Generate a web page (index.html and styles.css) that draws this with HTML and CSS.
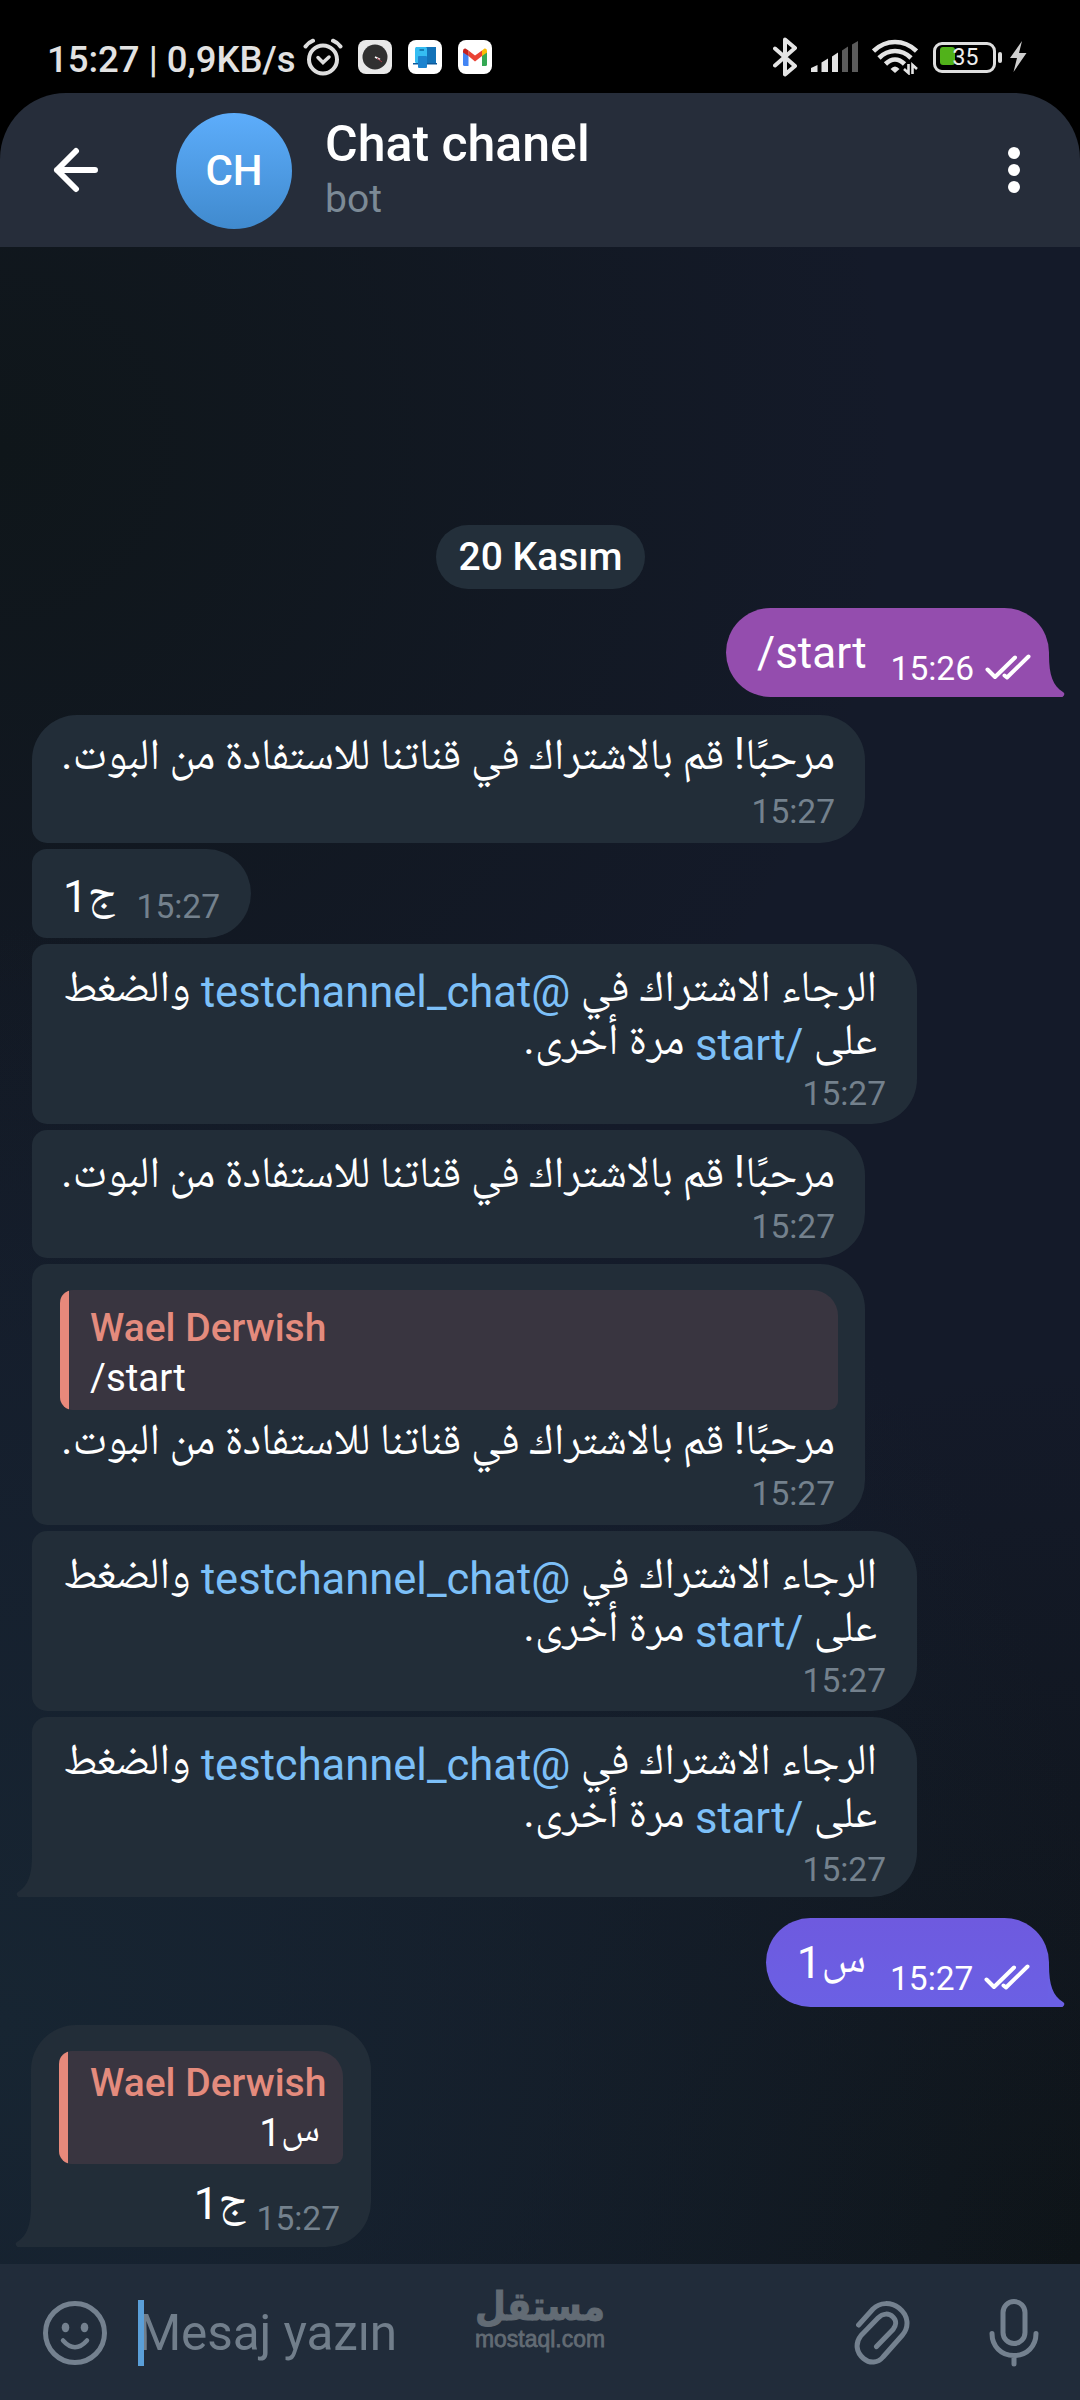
FILE: index.html
```html
<!DOCTYPE html>
<html lang="tr">
<head>
<meta charset="utf-8">
<title>Chat chanel</title>
<link rel="stylesheet" href="styles.css">
</head>
<body>
<div class="screen">
  <div class="status">
    <span class="clock">15:27 | 0,9KB/s</span>
    <svg class="alarm" width="40" height="38" viewBox="0 0 40 38" fill="none" stroke="#dedede" stroke-linecap="round"><circle cx="20" cy="21.500" r="14" stroke-width="4"/><path d="M2.500 8.500Q5.500 4.500 10 2.700M37.500 8.500Q34.500 4.500 30 2.700" stroke-width="4"/><path d="M15 19.500L20 24.500L26 19" stroke-width="3.500"/></svg>
    <svg width="34" height="34" viewBox="0 0 34 34"><rect width="34" height="34" rx="8" fill="#e9e9e9"/><circle cx="17" cy="17" r="12.500" fill="#303030"/><path d="M17 17L22 19.500" stroke="#fff" stroke-width="1.600"/><path d="M19 18L24 22" stroke="#a34" stroke-width="1"/></svg>
    <svg width="34" height="34" viewBox="0 0 34 34"><rect width="34" height="34" rx="8" fill="#fff"/><path d="M8 7H28V23H8Z" fill="#1272b8"/><path d="M5 23H29V24.500H5Z" fill="#0d5a9c"/><rect x="7" y="7" width="12" height="16" rx="1.500" fill="#35bdf2"/><rect x="10" y="16" width="9" height="12" rx="1" fill="#1b83cf"/><path d="M11.500 10H16" stroke="#0a5c95" stroke-width="1.300"/></svg>
    <svg width="34" height="34" viewBox="0 0 34 34"><rect width="34" height="34" rx="8" fill="#fff"/><path d="M5 12V24.500Q5 26 6.500 26H10.500V14Z" fill="#4285f4"/><path d="M24 14V26H27.500Q29 26 29 24.500V12Z" fill="#34a853"/><path d="M24 10.500V16L29 12.500V11Q29 8 26.500 8.500Z" fill="#fbbc04"/><path d="M10.500 10.500L17 15.500L24 10.500V16L17 21.500L10.500 16Z" fill="#ea4335"/><path d="M10.500 10.500V16L5 12.500V11Q5 8 7.500 8.500Z" fill="#c5221f"/></svg>
    <span class="grow"></span>
    <svg class="bt" width="24" height="40" viewBox="0 0 24 40" fill="none" stroke="#e4e4e4" stroke-width="4" stroke-linecap="round" stroke-linejoin="round"><path d="M2 11.500L22 29L12 37.500V2.500L22 11L2 28.500"/></svg>
    <svg class="signal" width="48" height="32" viewBox="0 0 48 32"><g fill="#e4e4e4"><path d="M0 27L6.500 24V31H0ZM10.500 21.500L17 17.500V31H10.500ZM21 15.500L27 11.500V31H21Z"/></g><path fill="#5b5b5b" d="M31 9.500L37 5.500V31H31ZM41 3.500L47 0V31H41Z"/></svg>
    <svg class="wifi" width="46" height="36" viewBox="0 0 46 36"><g fill="none" stroke="#e4e4e4" stroke-width="4.600"><path d="M1.500 12Q11 3 23 3T44.500 12"/><path d="M7 19Q14 12 23 12T39 19"/><path d="M13.500 25Q18 20.500 23 20.500T32.500 25"/></g><path d="M18.500 30Q23 25 27.500 30L23 34Z" fill="#e4e4e4"/><path d="M36.500 25V34L32 30M40.500 35V26L45 30" fill="none" stroke="#e4e4e4" stroke-width="2.600"/></svg>
    <div class="battery"><i class="level"></i><span>35</span></div><i class="nub"></i>
    <svg class="bolt" width="18" height="32" viewBox="0 0 18 32"><path d="M13 0L1 17H8L4.500 31L17.500 12H10Z" fill="#cfcfcf"/></svg>
  </div>

  <header class="header">
    <svg class="back" width="46" height="46" viewBox="0 0 46 46" fill="none" stroke="#fff" stroke-width="6" stroke-linecap="round" stroke-linejoin="round"><path d="M42 23H4M23 4L4 23L23 42"/></svg>
    <div class="avatar">CH</div>
    <div class="who"><h1>Chat chanel</h1><p>bot</p></div>
    <div class="more"><i></i><i></i><i></i></div>
  </header>

  <main class="chat">
    <div class="date">20 Kasım</div>

    <div class="out out-a">
      <span class="txt">/start</span><time>15:26</time>
      <svg class="ticks" width="46" height="27" viewBox="0 0 46 27"><path d="M2.500 15.500L10 23L30 3.500M19.500 21.500L22 23.500L43.500 2.500"/></svg>
      <svg class="tail" width="17" height="42" viewBox="0 0 17 42"><path d="M0 0H1C1 20 5 31 15 37Q18 39 14.500 42H0Z"/></svg>
    </div>

    <div class="in w-m first">
      <p dir="rtl"><span class="ar">مرحبًا! قم بالاشتراك في قناتنا للاستفادة من البوت.</span></p>
      <time>15:27</time>
    </div>

    <div class="in short">
      <p dir="rtl"><span class="ar">ج</span>1</p><time>15:27</time>
    </div>

    <div class="in w-l">
      <p dir="rtl"><span class="ar">الرجاء الاشتراك في </span><a>@testchannel_chat</a><span class="ar"> والضغط</span><br><span class="ar">على </span><a>/start</a><span class="ar"> مرة أخرى.</span></p>
      <time>15:27</time>
    </div>

    <div class="in w-m">
      <p dir="rtl"><span class="ar">مرحبًا! قم بالاشتراك في قناتنا للاستفادة من البوت.</span></p>
      <time>15:27</time>
    </div>

    <div class="in w-m reply">
      <div class="quote"><b>Wael Derwish</b><span>/start</span></div>
      <p dir="rtl"><span class="ar">مرحبًا! قم بالاشتراك في قناتنا للاستفادة من البوت.</span></p>
      <time>15:27</time>
    </div>

    <div class="in w-l">
      <p dir="rtl"><span class="ar">الرجاء الاشتراك في </span><a>@testchannel_chat</a><span class="ar"> والضغط</span><br><span class="ar">على </span><a>/start</a><span class="ar"> مرة أخرى.</span></p>
      <time>15:27</time>
    </div>

    <div class="in w-l last">
      <p dir="rtl"><span class="ar">الرجاء الاشتراك في </span><a>@testchannel_chat</a><span class="ar"> والضغط</span><br><span class="ar">على </span><a>/start</a><span class="ar"> مرة أخرى.</span></p>
      <time>15:27</time>
      <svg class="tail" width="17" height="42" viewBox="0 0 17 42"><path d="M17 0H16C16 20 12 31 2 37Q-1 39 2.500 42H17Z"/></svg>
    </div>

    <div class="out out-b">
      <span class="txt" dir="rtl"><span class="ar">س</span>1</span><time>15:27</time>
      <svg class="ticks" width="46" height="27" viewBox="0 0 46 27"><path d="M2.500 15.500L10 23L30 3.500M19.500 21.500L22 23.500L43.500 2.500"/></svg>
      <svg class="tail" width="17" height="42" viewBox="0 0 17 42"><path d="M0 0H1C1 20 5 31 15 37Q18 39 14.500 42H0Z"/></svg>
    </div>

    <div class="in answer">
      <div class="quote"><b>Wael Derwish</b><span dir="rtl"><span class="ar">س</span>1</span></div>
      <div class="row"><p dir="rtl"><span class="ar">ج</span>1</p><time>15:27</time></div>
      <svg class="tail" width="17" height="42" viewBox="0 0 17 42"><path d="M17 0H16C16 20 12 31 2 37Q-1 39 2.500 42H17Z"/></svg>
    </div>
  </main>

  <footer class="composer">
    <svg width="64" height="64" viewBox="0 0 64 64" fill="none" stroke="#74818f" stroke-width="5" stroke-linecap="round"><circle cx="32" cy="32" r="29.500"/><path d="M20 39.500Q32 53 44 39.500" stroke-width="4.500"/><g fill="#74818f" stroke="none"><ellipse cx="22.500" cy="26.500" rx="3.800" ry="4.800"/><ellipse cx="41.500" cy="26.500" rx="3.800" ry="4.800"/></g></svg>
    <div class="field"><i class="caret"></i>Mesaj yazın</div>
    <svg class="clip" width="58" height="64" viewBox="0 0 58 64" fill="none" stroke="#74818f" stroke-width="5" stroke-linecap="round" stroke-linejoin="round"><path d="M4.600 24L19 8C26 1 37 1 45 7C55 15 55 26 48.500 34L29 56C24 62 16 63 9.500 57.500C2 51 1 42 7 34.500L24 17C29 12 35 12 39 16C43 20 42 25 39 28.500L22.500 45.600"/></svg>
    <svg class="mic" width="50" height="68" viewBox="0 0 50 68" fill="none" stroke="#74818f" stroke-width="5" stroke-linecap="round"><rect x="14" y="2.500" width="22" height="42" rx="11"/><path d="M3 34.500C3 47 12 56.500 25 56.500S47 47 47 34.500M25 57V65"/></svg>
    <div class="mark">
      <svg width="134" height="76" viewBox="0 -12 134 76"><text class="mark-ar" x="1" y="29" textLength="130" lengthAdjust="spacingAndGlyphs">مستقل</text><text class="mark-en" x="1" y="56" textLength="130" lengthAdjust="spacingAndGlyphs">mostaql.com</text></svg>
    </div>
  </footer>
</div>
</body>
</html>
```
FILE: styles.css
```css
* { box-sizing: border-box; margin: 0; padding: 0; }
body { background: #000; font-family: Roboto, "Noto Naskh Arabic", "Noto Sans Arabic", serif; color: #fff; }
svg { display: block; flex: none; }
i { display: block; }

.screen {
  width: 1080px; height: 2400px; overflow: hidden;
  display: flex; flex-direction: column;
}

/* status bar */
.status { height: 93px; padding: 21px 53px 0 47px; display: flex; align-items: center; flex: none; }
.clock { width: 256px; padding-top: 5px; font-size: 36.500px; font-weight: 500; color: #e2e2e2; white-space: nowrap; line-height: 40px; }
.alarm { margin-right: 15px; }
.alarm + svg, .alarm + svg + svg { margin-right: 16px; }
.grow { flex: 1; }
.bt { margin-right: 14px; }
.signal { margin-right: 13px; }
.wifi { margin-right: 15px; }
.battery { width: 63px; height: 31px; border: 3.500px solid #dedede; border-radius: 9px; position: relative; flex: none; font-size: 23px; line-height: 25px; text-align: center; color: #eee; }
.battery span { position: relative; left: 1px; }
.level { position: absolute; left: 4px; top: 2.500px; width: 15px; height: 18px; border-radius: 3px; background: #51b21a; }
.nub { width: 4px; height: 11px; background: #dedede; border-radius: 2px; margin: 0 7px 0 2px; }

/* header */
.header {
  height: 154px; flex: none; background: #262d3a; border-radius: 66px 66px 0 0;
  display: flex; align-items: center; padding: 0 60px 0 53px;
}
.back { margin-right: 77px; }
.avatar {
  width: 116px; height: 116px; margin-top: 2px; border-radius: 50%;
  background: linear-gradient(#5dadfb, #408ace);
  font-size: 42px; font-weight: 500; text-align: center; line-height: 115px;
}
.who { margin-left: 33px; flex: 1; }
.who h1 { font-size: 50px; font-weight: 500; line-height: 58px; margin-top: -3px; }
.who p { font-size: 39px; line-height: 46px; padding-top: 3px; color: #7c8a96; }
.more { display: flex; flex-direction: column; gap: 5px; }
.more i { width: 12px; height: 12px; border-radius: 50%; background: #fff; }

/* conversation */
.chat {
  flex: 1; display: flex; flex-direction: column; align-items: flex-start;
  padding: 278px 31px 0 32px;
  background:
    radial-gradient(circle 1100px at 0% 88%, #172532 0%, #17253200 100%),
    radial-gradient(circle 900px at 100% 100%, #0e1418 0%, #0e141800 100%),
    radial-gradient(circle 900px at 0% 10%, #0f161a 0%, #0f161a00 100%),
    #141a29;
}
.date {
  align-self: center; height: 64px; padding: 0 23px; border-radius: 32px; background: #232f3a;
  font-size: 39px; font-weight: 500; line-height: 64px; margin-bottom: 19px;
}
.ar { font-size: 44px; line-height: 0; vertical-align: 6px; }
time { font-size: 33.500px; line-height: 38px; color: #74818d; white-space: nowrap; }

.in { position: relative; background: #222d38; border-radius: 15px 45px 45px 15px; margin-bottom: 6px; display: flex; flex-direction: column; }
.in p { font-size: 44px; line-height: 52px; white-space: nowrap; }
.in a { color: #7dc0f8; font-size: 43.500px; }
.in > time { align-self: flex-end; }
.w-m { width: 833px; height: 128px; padding: 22px 30px 0 30px; }
.w-m p { word-spacing: -1.300px; }
.w-m > time { margin-top: 4px; }
.first { border-top-left-radius: 45px; padding-top: 19px; }
.first > time { margin-top: 7px; }
.w-l { width: 885px; height: 180px; padding: 22px 31px 0 30px; }
.w-l p { margin-right: 9px; word-spacing: -.5px; }
.w-l > time { margin-top: 3px; }
.short { width: 219px; height: 89px; flex-direction: row; justify-content: space-between; padding: 22px 31px 0 31px; margin-bottom: 6px; }
.short > time { align-self: flex-start; margin-top: 17px; }
.last { border-bottom-left-radius: 0; margin-bottom: 21px; padding-top: 22px; }
.last > time { margin-top: 6px; }
.tail { position: absolute; bottom: 0; }
.in .tail { left: -16px; fill: #222d38; }

.quote {
  background: linear-gradient(90deg, #e8897b 9px, #393540 9px); border-radius: 13px 26px 9px 13px;
  display: flex; flex-direction: column; padding-left: 30px;
}
.quote b { font-size: 39px; font-weight: 500; line-height: 50px; color: #e48b7d; white-space: nowrap; }
.quote > span { font-size: 38.500px; line-height: 50px; }
.quote .ar { font-size: 38.500px; vertical-align: 5px; }
.reply { height: 261px; padding-top: 26px; }
.reply .quote { height: 120px; padding-top: 13px; margin: 0 -3px 9px -2px; }
.answer { width: 340px; height: 222px; margin-left: -1px; border-radius: 45px 45px 45px 0; padding: 26px 28px 0; }
.answer .quote { height: 113px; padding: 7px 23px 0 31px; }
.row { display: flex; justify-content: flex-end; padding: 14px 3px 0 0; gap: 10px; }
.row time { margin-top: 22px; }

.out {
  align-self: flex-end; position: relative; height: 89px; border-radius: 45px 45px 0 45px;
  display: flex; align-items: flex-start; padding: 0 18px 0 31px; margin-bottom: 18px;
}
.out .txt { font-size: 44px; line-height: 52px; margin-top: 19px; flex: 1; white-space: nowrap; }
.out time { color: #fff; margin: 42px 11px 0 0; }
.ticks { margin-top: 46px; fill: none; stroke: #fff; stroke-width: 4; stroke-linecap: round; stroke-linejoin: round; }
.out .tail { right: -16px; }
.out-a { width: 323px; background: #944dae; }
.out-a .tail { fill: #944dae; }
.out-b { width: 283px; background: linear-gradient(#6e5adf, #6b60e4); }
.out-b .txt { flex: none; width: 69px; margin-right: 24px; }
.out-b .tail { fill: #6b60e4; }

/* composer */
.composer { position: relative; height: 136px; flex: none; background: #212c3a; display: flex; align-items: center; padding: 2px 41px 0 43px; }
.field { position: relative; flex: 1; margin-left: 31px; font-size: 49.500px; letter-spacing: -.1px; line-height: 66px; color: #717e8b; }
.caret { position: absolute; left: 0; top: 0; width: 6px; height: 66px; background: #5a9fd8; }
.clip { margin-right: 77px; }
.mark { position: absolute; left: 474px; top: 15px; }
.mark text { fill: #626b74; }
.mark-ar { font: bold 40px "DejaVu Sans", sans-serif; stroke: #626b74; stroke-width: 1; }
.mark-en { font: 24px "Liberation Sans", sans-serif; stroke: #626b74; stroke-width: .8; }
```
